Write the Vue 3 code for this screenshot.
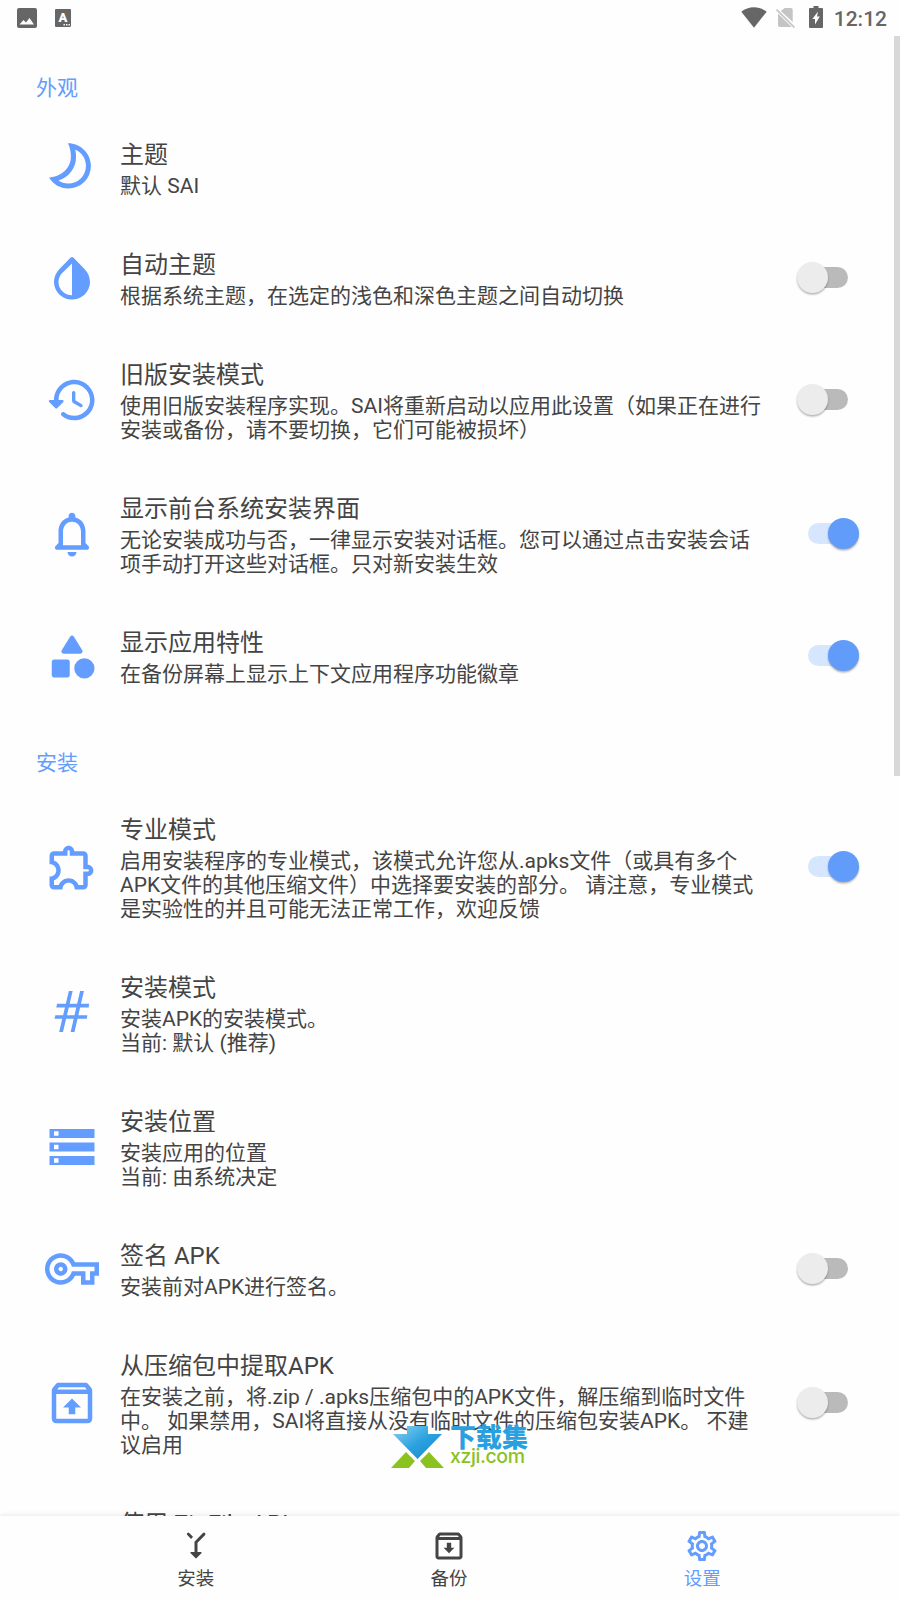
<script setup>
const icons = {
  moon: 'M10.2 1C15.8 1 20.4 5.5 20.4 11.1A10 10 0 0 1 10.3 21.1C6.8 21.1 3.7 19.3 1.8 16.2C7.4 15.8 11.5 11.9 11.5 7C11.5 4.8 11.1 2.8 10.2 1ZM13.4 3.8C13.7 4.9 13.8 5.9 13.8 7.2C13.8 11.9 10.7 16 6 17.6C7.2 18.4 8.7 18.9 10.3 18.9A7.8 7.8 0 0 0 18.2 11.1C18.2 7.9 16.3 5.1 13.4 3.8Z',
  drop: 'M12 5.5v14.2c-3.31 0-6-2.63-6-5.87 0-1.56.62-3.03 1.75-4.14L12 5.5M11.3 2.98 6.35 8.06C4.9 9.49 4 11.56 4 13.73 4 18.08 7.58 21.5 12 21.5s8-3.42 8-7.77c0-2.17-.9-4.24-2.35-5.67L12.7 2.98a1 1 0 0 0-1.4 0z',
  history: 'M13.26 3C8.17 2.86 4 6.95 4 12H2.21c-.45 0-.67.54-.35.85l2.79 2.8c.2.2.51.2.71 0l2.79-2.8c.31-.31.09-.85-.36-.85H6c0-3.9 3.18-7.05 7.1-7 3.72.05 6.85 3.18 6.9 6.9.05 3.91-3.1 7.1-7 7.1-1.61 0-3.1-.55-4.28-1.48-.4-.31-.96-.28-1.32.08-.42.42-.39 1.13.08 1.49C9 20.29 10.91 21 13 21c5.05 0 9.14-4.17 9-9.26-.13-4.69-4.05-8.61-8.74-8.74zm-.51 5c-.41 0-.75.34-.75.75v3.68c0 .35.19.68.49.86l3.12 1.85c.36.21.82.09 1.03-.26.21-.36.09-.82-.26-1.03l-2.88-1.71v-3.4c0-.4-.34-.74-.75-.74z',
  bell: 'M12 22c1.1 0 2-.9 2-2h-4c0 1.1.89 2 2 2zm6-6v-5c0-3.07-1.63-5.64-4.5-6.32V4c0-.83-.67-1.5-1.5-1.5s-1.5.67-1.5 1.5v.68C7.64 5.36 6 7.92 6 11v5l-1.29 1.29c-.63.63-.19 1.71.7 1.71h13.17c.89 0 1.34-1.08.71-1.71L18 16zm-2 1H8v-6c0-2.48 1.51-4.5 4-4.5s4 2.02 4 4.5v6z',
  shapes: 'M11.15 3.4L7.43 9.48c-.41.66.07 1.52.85 1.52h7.43c.78 0 1.26-.86.85-1.52L12.85 3.4c-.39-.64-1.31-.64-1.7 0zM13 17.5a4.5 4.5 0 1 0 9 0a4.5 4.5 0 1 0-9 0zM4 21.5h6c.55 0 1-.45 1-1v-6c0-.55-.45-1-1-1H4c-.55 0-1 .45-1 1v6c0 .55.45 1 1 1z',
  puzzle: 'M10.5 4.5c.28 0 .5.22.5.5v2h6v6h2c.28 0 .5.22.5.5s-.22.5-.5.5h-2v6h-2.12c-.68-1.75-2.39-3-4.38-3s-3.7 1.25-4.38 3H4v-2.12c1.75-.68 3-2.39 3-4.38 0-1.99-1.24-3.7-2.99-4.38L4 7h6V5c0-.28.22-.5.5-.5m0-2C9.12 2.5 8 3.62 8 5H4c-1.1 0-1.99.9-1.99 2v3.8h.29c1.49 0 2.7 1.21 2.7 2.7s-1.21 2.7-2.7 2.7H2V20c0 1.1.9 2 2 2h3.8v-.3c0-1.49 1.21-2.7 2.7-2.7s2.7 1.21 2.7 2.7v.3H17c1.1 0 2-.9 2-2v-4c1.38 0 2.5-1.12 2.5-2.5S20.38 11 19 11V7c0-1.1-.9-2-2-2h-4c0-1.38-1.12-2.5-2.5-2.5z',
  hash: 'M10.6 2.2h1.7L8 20.4H6.3zM15.6 2.2h1.7L13.1 20.4h-1.7zM5.4 7.9h14.2l-.2 1.6H5zM4.6 13h14.2l-.2 1.6H4.2z',
  storage: 'M2 20h20v-4H2v4zm2-3h2v2H4v-2zM2 4v4h20V4H2zm4 3H4V5h2v2zm-4 7h20v-4H2v4zm2-3h2v2H4v-2z',
  key: 'M22 19h-6v-4h-2.68c-1.14 2.42-3.6 4-6.32 4-3.86 0-7-3.14-7-7s3.14-7 7-7c2.72 0 5.17 1.58 6.32 4H24v6h-2v4zm-4-2h2v-4h2v-2H11.94l-.23-.67C11.01 8.34 9.11 7 7 7c-2.76 0-5 2.24-5 5s2.24 5 5 5c2.11 0 4.01-1.34 4.71-3.33l.23-.67H18v4zM7 15c-1.65 0-3-1.35-3-3s1.35-3 3-3 3 1.35 3 3-1.35 3-3 3zm0-4c-.55 0-1 .45-1 1s.45 1 1 1 1-.45 1-1-.45-1-1-1z',
  unarchive: 'M20.55 5.22l-1.39-1.68C18.88 3.21 18.47 3 18 3H6c-.47 0-.88.21-1.15.55L3.46 5.22C3.17 5.57 3 6.01 3 6.5V19c0 1.1.89 2 2 2h14c1.1 0 2-.9 2-2V6.5c0-.49-.17-.93-.45-1.28zM6.24 5h11.52l.83 1H5.42l.82-1zM5 19V8h14v11H5zm3-5h2.55v3h2.9v-3H16l-4-4-4 4z',
  archive: 'M20.55 5.22l-1.39-1.68C18.88 3.21 18.47 3 18 3H6c-.47 0-.88.21-1.15.55L3.46 5.22C3.17 5.57 3 6.01 3 6.5V19c0 1.1.89 2 2 2h14c1.1 0 2-.9 2-2V6.5c0-.49-.17-.93-.45-1.28zM6.24 5h11.52l.83 1H5.42l.82-1zM5 19V8h14v11H5zM15.6 13.2h-2.15V9.8h-2.9v3.4H8.4L12 16.8z',
  merge: 'M6.2 4.7a.9.9 0 0 1 1.3-1.3l2.5 2.5-1.3 1.4zM16.6 3.4a.95.95 0 0 1 1.4 1.4L13 9.9V16h2.2c.5 0 .7.5.4.8l-3 3.1a.8.8 0 0 1-1.2 0l-3-3.1c-.3-.3-.1-.8.4-.8H11V9.1z',
  gear: 'M19.43 12.98c.04-.32.07-.64.07-.98 0-.34-.03-.66-.07-.98l2.11-1.65c.19-.15.24-.42.12-.64l-2-3.46c-.09-.16-.26-.25-.44-.25-.06 0-.12.01-.17.03l-2.49 1c-.52-.4-1.08-.73-1.69-.98l-.38-2.65C14.46 2.18 14.25 2 14 2h-4c-.25 0-.46.18-.49.42l-.38 2.65c-.61.25-1.17.59-1.69.98l-2.49-1c-.06-.02-.12-.03-.18-.03-.17 0-.34.09-.43.25l-2 3.46c-.13.22-.07.49.12.64l2.11 1.65c-.04.32-.07.65-.07.98 0 .33.03.66.07.98l-2.11 1.65c-.19.15-.24.42-.12.64l2 3.46c.09.16.26.25.44.25.06 0 .12-.01.17-.03l2.49-1c.52.4 1.08.73 1.69.98l.38 2.65c.03.24.24.42.49.42h4c.25 0 .46-.18.49-.42l.38-2.65c.61-.25 1.17-.59 1.69-.98l2.49 1c.06.02.12.03.18.03.17 0 .34-.09.43-.25l2-3.46c.12-.22.07-.49-.12-.64l-2.11-1.65zm-1.98-1.71c.04.31.05.52.05.73 0 .21-.02.43-.05.73l-.14 1.13.89.7 1.08.84-.7 1.21-1.27-.51-1.04-.42-.9.68c-.43.32-.84.56-1.25.73l-1.06.43-.16 1.13-.2 1.35h-1.4l-.19-1.35-.16-1.13-1.06-.43c-.43-.18-.83-.41-1.23-.71l-.91-.7-1.06.43-1.27.51-.7-1.21 1.08-.84.89-.7-.14-1.13c-.03-.31-.05-.54-.05-.74s.02-.43.05-.73l.14-1.13-.89-.7-1.08-.84.7-1.21 1.27.51 1.04.42.9-.68c.43-.32.84-.56 1.25-.73l1.06-.43.16-1.13.2-1.35h1.39l.19 1.35.16 1.13 1.06.43c.43.18.83.41 1.23.71l.91.7 1.06-.43 1.27-.51.7 1.21-1.07.85-.89.7.14 1.13zM12 8c-2.21 0-4 1.79-4 4s1.79 4 4 4 4-1.79 4-4-1.79-4-4-4zm0 6c-1.1 0-2-.9-2-2s.9-2 2-2 2 .9 2 2-.9 2-2 2z'
}

const sections = [
  {
    name: '外观',
    rows: [
      { icon: 'moon', title: '主题', lines: ['默认 SAI'] },
      { icon: 'drop', title: '自动主题', lines: ['根据系统主题，在选定的浅色和深色主题之间自动切换'], toggle: 'off' },
      { icon: 'history', title: '旧版安装模式', lines: ['使用旧版安装程序实现。SAI将重新启动以应用此设置（如果正在进行', '安装或备份，请不要切换，它们可能被损坏）'], toggle: 'off' },
      { icon: 'bell', title: '显示前台系统安装界面', lines: ['无论安装成功与否，一律显示安装对话框。您可以通过点击安装会话', '项手动打开这些对话框。只对新安装生效'], toggle: 'on' },
      { icon: 'shapes', title: '显示应用特性', lines: ['在备份屏幕上显示上下文应用程序功能徽章'], toggle: 'on' }
    ]
  },
  {
    name: '安装',
    rows: [
      { icon: 'puzzle', title: '专业模式', lines: ['启用安装程序的专业模式，该模式允许您从.apks文件（或具有多个', 'APK文件的其他压缩文件）中选择要安装的部分。 请注意，专业模式', '是实验性的并且可能无法正常工作，欢迎反馈'], toggle: 'on' },
      { icon: 'hash', title: '安装模式', lines: ['安装APK的安装模式。', '当前: 默认 (推荐)'] },
      { icon: 'storage', title: '安装位置', lines: ['安装应用的位置', '当前: 由系统决定'] },
      { icon: 'key', title: '签名 APK', lines: ['安装前对APK进行签名。'], toggle: 'off' },
      { icon: 'unarchive', title: '从压缩包中提取APK', lines: ['在安装之前，将.zip / .apks压缩包中的APK文件，解压缩到临时文件', '中。 如果禁用，SAI将直接从没有临时文件的压缩包安装APK。 不建', '议启用'], toggle: 'off' },
      { title: '使用 ZipFile API', lines: [] }
    ]
  }
]

const tabs = [
  { icon: 'merge', label: '安装' },
  { icon: 'archive', label: '备份' },
  { icon: 'gear', label: '设置', active: true }
]
</script>

<template>
  <div class="screen">
    <header class="status">
      <svg class="st-image" width="20" height="20" viewBox="0 0 20 20"><path fill="#666" fill-rule="evenodd" d="M2 0h16a2 2 0 0 1 2 2v16a2 2 0 0 1-2 2H2a2 2 0 0 1-2-2V2a2 2 0 0 1 2-2zM2.5 16.5h14.5L12.5 10 9 14.5 6.5 12z" /></svg>
      <svg class="st-lang" width="16" height="18" viewBox="0 0 16 18">
        <rect width="16" height="18" rx="1" fill="#666" />
        <text x="8" y="13" text-anchor="middle" class="st-letter">A</text>
        <path fill="#fff" d="M8.5 15h1.4v1.4H8.5zM11 15h1.4v1.4H11zM13.5 15h1.4v1.4h-1.4z" />
      </svg>
      <span class="grow"></span>
      <svg class="st-wifi" width="26" height="21" viewBox="0 0 26 21"><path fill="#666" d="M.3 4.7C3.8 1.9 8.2.3 13 .3s9.2 1.6 12.7 4.4L13 20.7z" /></svg>
      <svg class="st-sim" width="20" height="20" viewBox="0 0 20 20">
        <path fill="#c4c4c4" d="M8.6 0H15a1.7 1.7 0 0 1 1.700 1.700V14L4.800 2.900zM2 5.600 15.700 19H3.700A1.700 1.700 0 0 1 2 17.300z" />
        <path stroke="#c4c4c4" stroke-width="1.7" d="M.5 1.5 18.5 19.5" />
      </svg>
      <svg class="st-battery" width="14" height="22" viewBox="0 0 14 22"><path fill="#666" fill-rule="evenodd" d="M4.500 0h5v2H13a1 1 0 0 1 1 1v18a1 1 0 0 1-1 1H1a1 1 0 0 1-1-1V3a1 1 0 0 1 1-1h3.500zM9 5.500 3.400 13H6v5.500l4.800-8H8z" /></svg>
      <span class="clock">12:12</span>
    </header>

    <main class="list">
      <section v-for="s in sections" :key="s.name">
        <h2 class="category">{{ s.name }}</h2>
        <div v-for="r in s.rows" :key="r.title" class="row">
          <svg class="icon" viewBox="0 0 24 24"><path v-if="r.icon" :d="icons[r.icon]" :fill-rule="r.icon === 'hash' ? 'nonzero' : 'evenodd'" /></svg>
          <div class="text">
            <div class="title">{{ r.title }}</div>
            <div class="summary"><div v-for="l in r.lines" :key="l">{{ l }}</div></div>
          </div>
          <span v-if="r.toggle" class="switch" :class="r.toggle"><i class="thumb"></i></span>
        </div>
      </section>
      <div class="scrollbar"></div>
    </main>

    <nav class="tabs">
      <div v-for="t in tabs" :key="t.label" class="tab" :class="{ active: t.active }">
        <svg class="tab-icon" viewBox="0 0 24 24"><path :d="icons[t.icon]" fill-rule="evenodd" /></svg>
        <span>{{ t.label }}</span>
      </div>
    </nav>

    <div class="watermark">
      <svg width="53" height="42" viewBox="0 0 53 42">
        <defs><linearGradient id="arrow" x1="0" y1="0" x2="1" y2="1"><stop offset="0" stop-color="#8fd0ee" /><stop offset=".5" stop-color="#2ba3e0" /><stop offset="1" stop-color="#1683c8" /></linearGradient></defs>
        <path fill="#8cc220" d="M0 42 15 26l9 9-6 7zM53 42 38 26l-9 9 6 7z" />
        <path fill="url(#arrow)" d="M16 0h21v8h14L26.500 33 2 8h14z" />
      </svg>
      <div class="wm-text"><b>下载集</b><span>xzji.com</span></div>
    </div>
  </div>
</template>

<style>
body { margin: 0; background: #fefefe; }
</style>

<style scoped>
.screen {
  position: relative;
  display: flex;
  flex-direction: column;
  width: 900px;
  height: 1600px;
  overflow: hidden;
  background: #fefefe;
  color: #444;
  font-family: Roboto, "Noto Sans CJK SC", sans-serif;
}
.status { flex: none; display: flex; box-sizing: border-box; height: 36px; padding: 0 13px 0 17px; align-items: center; }
.st-lang { margin-left: 18px; }
.st-letter { font: 900 13px Roboto, sans-serif; fill: #fff; }
.grow { flex: 1; }
.st-wifi { margin-right: 9px; margin-top: -1px; }
.st-sim { margin-right: 13px; }
.st-battery { margin-right: 11px; margin-top: -2px; }
.clock { font-size: 21px; font-weight: 500; line-height: 36px; padding-top: 1px; color: #666; }
.list { position: relative; flex: 1; min-height: 0; overflow: hidden; }
.category { box-sizing: border-box; height: 77px; margin: 0; padding: 37px 36px 0; font-size: 21px; line-height: 30px; font-weight: 400; color: #639dfd; }
.row { display: flex; align-items: center; padding-left: 45px; }
.icon { flex: none; width: 54px; height: 54px; fill: #639dff; }
.text { flex: 1; margin-left: 21px; padding: 28px 0 25px; white-space: nowrap; }
.title { font-size: 24px; line-height: 28px; margin-bottom: 5px; }
.summary { font-size: 21px; line-height: 24px; }
.switch { flex: none; position: relative; width: 50px; height: 21px; border-radius: 11px; margin: 0 52px 2px 0; background: #bababa; }
.switch.on { margin-right: 42px; background: #d6e6ff; }
.thumb { position: absolute; top: -5px; left: -1px; width: 31px; height: 31px; border-radius: 50%; background: #ececec; box-shadow: 0 1.5px 2px rgba(0, 0, 0, .3); }
.on .thumb { left: auto; right: -1px; background: #619cfb; }
.scrollbar { position: absolute; top: 0; right: 0; width: 6px; height: 740px; background: #d8d8d8; }
.tabs { flex: none; position: relative; display: flex; box-sizing: border-box; height: 84px; padding: 12px 71px 0 69px; background: #fefefe; box-shadow: 0 -1px 5px rgba(0, 0, 0, .09); }
.tab { flex: 1; display: flex; flex-direction: column; align-items: center; font-size: 18.5px; line-height: 30px; fill: #444; }
.tab-icon { width: 36px; height: 36px; }
.tab.active { color: #639dff; fill: #639dff; }
.watermark { position: absolute; left: 391px; top: 1426px; display: flex; gap: 6px; }
.wm-text { display: flex; flex-direction: column; white-space: nowrap; }
.wm-text b { font-size: 26px; font-weight: 900; line-height: 24px; color: #29a1e1; }
.wm-text span { font-family: Inter, Roboto, sans-serif; font-size: 19.5px; font-weight: 500; line-height: 13px; letter-spacing: -.4px; color: #8cc220; }
</style>
